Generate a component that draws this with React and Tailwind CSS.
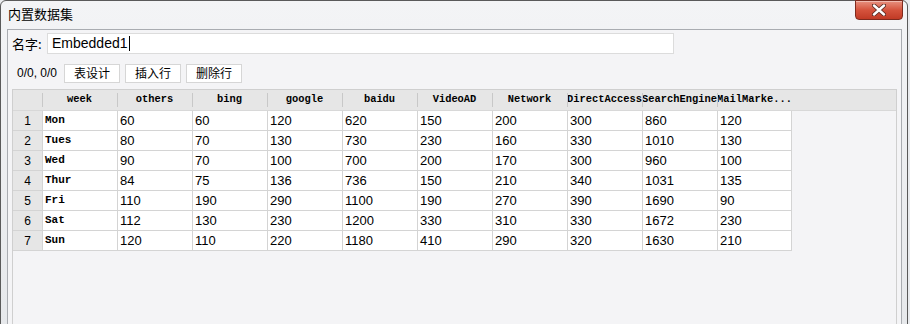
import React from "react";

const cols = ["week","others","bing","google","baidu","VideoAD","Network","DirectAccess","SearchEngine","MailMarke..."];
const rows = [
  ["Mon","60","60","120","620","150","200","300","860","120"],
  ["Tues","80","70","130","730","230","160","330","1010","130"],
  ["Wed","90","70","100","700","200","170","300","960","100"],
  ["Thur","84","75","136","736","150","210","340","1031","135"],
  ["Fri","110","190","290","1100","190","270","390","1690","90"],
  ["Sat","112","130","230","1200","330","310","330","1672","230"],
  ["Sun","120","110","220","1180","410","290","320","1630","210"],
];

const cjk = { fontFamily: '"Noto Sans CJK SC", "Noto Sans", sans-serif' };
const mono = { fontFamily: '"Liberation Mono", "DejaVu Sans Mono", monospace' };
const sans = { fontFamily: '"Liberation Sans", Arial, sans-serif' };

function Btn({ children }) {
  return (
    <div className="w-[56px] h-[19px] bg-white border border-[#d6d6d6] flex items-center justify-center text-[12px] text-black leading-none" style={cjk}>
      {children}
    </div>
  );
}

export default function App() {
  return (
    <div className="w-[910px] h-[324px] overflow-hidden bg-[#e9ebee]">
      <div className="w-[908px] h-[340px] border border-[#5a5a5a] rounded-t-[6px] bg-gradient-to-b from-[#f3f4f6] to-[#e6e8eb] flex flex-col relative">
        {/* title bar */}
        <div className="h-[28px] flex items-center pl-[7px] relative">
          <span className="text-[13px] text-black mt-[-2px]" style={cjk}>内置数据集</span>
          <div className="absolute right-[4px] top-[-1px] w-[48px] h-[20px] rounded-b-[4px] border border-[#7e2a1e] bg-gradient-to-b from-[#e7907f] via-[#d5533d] to-[#c13a25] flex items-center justify-center shadow-[inset_0_1px_0_rgba(255,255,255,0.4)]">
            <svg width="14" height="12" viewBox="0 0 14 12">
              <path d="M2 1.5 L12 10.5 M12 1.5 L2 10.5" stroke="#5a2a22" strokeWidth="4.2" strokeLinecap="round" />
              <path d="M2 1.5 L12 10.5 M12 1.5 L2 10.5" stroke="#ffffff" strokeWidth="2.4" strokeLinecap="round" />
            </svg>
          </div>
        </div>
        {/* body */}
        <div className="flex-1 flex pl-[6px] pr-[5px]">
          <div className="flex-1 border-l border-t border-r border-[#a9acb1] bg-[#f4f4f6] flex flex-col">
            {/* name row */}
            <div className="flex items-center h-[21px] mt-[3px]">
              <span className="ml-[4px] w-[35px] text-[13px] text-black" style={cjk}>名字:</span>
              <div className="w-[627px] h-[21px] bg-white border border-[#dcdcdc] flex items-center pl-[4px]">
                <span className="text-[14px] text-black" style={sans}>Embedded1</span>
                <span className="w-px h-[15px] bg-black ml-px" />
              </div>
            </div>
            {/* toolbar */}
            <div className="flex items-center h-[20px] mt-[9px]">
              <span className="ml-[9px] w-[47px] text-[12px] text-black" style={sans}>0/0, 0/0</span>
              <div className="flex gap-[5px]">
                <Btn>表设计</Btn>
                <Btn>插入行</Btn>
                <Btn>删除行</Btn>
              </div>
            </div>
            {/* grid */}
            <div className="mt-[6px] ml-[4px] mr-[4px] flex-1 border-l border-t border-r border-[#cfcfcf] bg-[#f4f4f6]">
              <div className="flex h-[21px] bg-[#e6e6e6] border-b border-[#d8d8d8]">
                <div className="w-[29px]" />
                {cols.map((c, i) => (
                  <div key={i} className="w-[75px] flex items-center justify-center relative text-[10.4px] text-black whitespace-nowrap" style={{ ...mono, fontWeight: 600 }}>
                    <span className="absolute left-0 top-[3px] h-[14px] w-px bg-[#fafafa] border-r border-[#c8c8c8]" />
                    {c}
                  </div>
                ))}
              </div>
              {rows.map((r, ri) => (
                <div key={ri} className="flex h-[20px]">
                  <div className="w-[29px] bg-[#e6e6e6] border-b border-[#d4d4d4] flex items-center justify-center text-[12px] text-black" style={sans}>{ri + 1}</div>
                  {r.map((v, ci) => (
                    <div key={ci} className="w-[75px] bg-white border-l border-b border-[#d4d4d4] flex items-center pl-[2px] text-[13px] text-black last:border-r" style={ci === 0 ? { ...mono, fontWeight: 700, fontSize: 11 } : sans}>
                      {v}
                    </div>
                  ))}
                </div>
              ))}
            </div>
          </div>
        </div>
      </div>
    </div>
  );
}
